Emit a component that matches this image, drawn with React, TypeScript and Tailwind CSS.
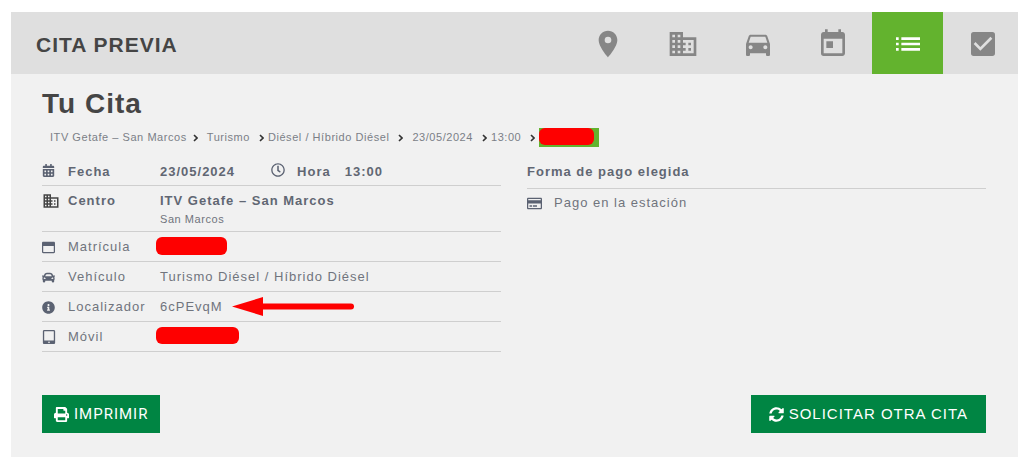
import type { ReactNode } from "react";
import clsx from "clsx";
import {
  FaCalendarAlt,
  FaCar,
  FaInfoCircle,
  FaPrint,
  FaRegClock,
  FaRegCreditCard,
  FaRegWindowMaximize,
  FaSyncAlt,
  FaTabletAlt,
} from "react-icons/fa";
import {
  MdBusiness,
  MdCheckBox,
  MdDirectionsCar,
  MdList,
  MdLocationOn,
  MdToday,
} from "react-icons/md";

const steps = [
  { label: "Estación", icon: MdLocationOn },
  { label: "Centro", icon: MdBusiness },
  { label: "Vehículo", icon: MdDirectionsCar },
  { label: "Fecha", icon: MdToday },
  { label: "Resumen", icon: MdList, active: true },
  { label: "Confirmación", icon: MdCheckBox },
];

function Header() {
  return (
    <header className="flex h-[62px] items-center justify-between bg-[#dfdfdf] pl-[25px]">
      <h1 className="pt-1 text-[21px] font-bold text-[#454545]">CITA PREVIA</h1>
      <nav className="flex h-full gap-1">
        {steps.map(({ label, icon: Icon, active }) => (
          <a
            key={label}
            href="#"
            aria-label={label}
            className={clsx(
              "flex w-[71px] items-center justify-center pt-0.5",
              active ? "bg-[#63b32e] text-white" : "text-[#868686]"
            )}
          >
            <Icon className="size-8" />
          </a>
        ))}
      </nav>
    </header>
  );
}

function Chevron() {
  return (
    <svg viewBox="0 0 5 8" className="mt-0.5 h-2 w-[5px] shrink-0" aria-hidden="true">
      <path d="M1 1l3 3-3 3" fill="none" stroke="#333" strokeWidth="1.6" />
    </svg>
  );
}

function Breadcrumb() {
  return (
    <nav className="flex h-5 items-center pl-2 text-[11px] tracking-wider text-[#7b7f87]">
      <span className="mr-1.5">ITV Getafe – San Marcos</span>
      <Chevron />
      <span className="mx-[9px]">Turismo</span>
      <Chevron />
      <span className="mr-[9px] ml-1">Diésel / Híbrido Diésel</span>
      <Chevron />
      <span className="mx-[9px]">23/05/2024</span>
      <Chevron />
      <span className="mr-[9px] ml-1">13:00</span>
      <Chevron />
      <span className="ml-1 h-[19px] w-[60px] bg-[#63b32e]">
        <span className="block h-[17px] w-[55px] rounded-md bg-[#fe0000]" />
      </span>
    </nav>
  );
}

type RowProps = {
  icon: ReactNode;
  label: string;
  bold?: boolean;
  children: ReactNode;
};

function Row({ icon, label, bold, children }: RowProps) {
  return (
    <div
      className={clsx(
        "grid grid-cols-[26px_92px_1fr] border-b border-[#cfcfcf] pt-[5px] leading-5",
        bold ? "pb-[3px] font-bold text-[#616773]" : "pb-1"
      )}
    >
      <dt className="col-span-2 grid grid-cols-subgrid">
        <span className="flex h-5 items-center text-[#5b6272]">{icon}</span>
        {label}
      </dt>
      <dd>{children}</dd>
    </div>
  );
}

function Arrow() {
  return (
    <svg viewBox="0 0 124 20" className="ml-[9px] h-5 w-[124px]" aria-hidden="true">
      <path d="M0 9.5L31 0v19z" fill="#fe0000" />
      <path d="M28 9.5h91" stroke="#fe0000" strokeWidth="6" strokeLinecap="round" />
    </svg>
  );
}

function Details() {
  return (
    <dl>
      <Row icon={<FaCalendarAlt className="mb-1 size-[13px]" />} label="Fecha" bold>
        <span className="flex items-center">
          23/05/2024
          <FaRegClock className="mr-3 mb-1 ml-9 size-[14px] text-[#5b6272]" />
          Hora
          <span className="ml-[14px]">13:00</span>
        </span>
      </Row>
      <Row icon={<MdBusiness className="size-[18px] text-[#444]" />} label="Centro" bold>
        ITV Getafe – San Marcos
        <small className="block pb-px text-[11px] leading-4 font-normal tracking-wider text-[#70747d]">
          San Marcos
        </small>
      </Row>
      <Row icon={<FaRegWindowMaximize className="size-[13px]" />} label="Matrícula">
        <span className="-ml-1 block h-[18px] w-[71px] rounded-md bg-[#fe0000]" />
      </Row>
      <Row icon={<FaCar className="size-[13px]" />} label="Vehículo">
        Turismo Diésel / Híbrido Diésel
      </Row>
      <Row icon={<FaInfoCircle className="size-[13px]" />} label="Localizador">
        <span className="flex items-center">
          6cPEvqM
          <Arrow />
        </span>
      </Row>
      <Row icon={<FaTabletAlt className="size-[14px]" />} label="Móvil">
        <span className="-ml-1 block h-[17px] w-[83px] rounded-md bg-[#fe0000]" />
      </Row>
    </dl>
  );
}

function Payment() {
  return (
    <section>
      <h3 className="border-b border-[#cfcfcf] pt-[5px] pb-1.5 leading-5 font-bold text-[#616773]">
        Forma de pago elegida
      </h3>
      <p className="flex items-center gap-3 py-1 leading-5">
        <FaRegCreditCard className="size-[15px] text-[#5b6272]" />
        Pago en la estación
      </p>
    </section>
  );
}

export default function App() {
  return (
    <div className="min-h-screen bg-white pt-3 pr-[6px] pl-[11px] font-['Liberation_Sans',Arial,sans-serif] text-[13px] tracking-[1px] text-[#70747d]">
      <div className="bg-[#f1f1f1]">
        <Header />
        <main className="pt-3 pr-8 pb-6 pl-[31px]">
          <h2 className="text-[28px] leading-9 font-bold text-[#454545]">Tu Cita</h2>
          <div className="pt-[5px] pb-2.5">
            <Breadcrumb />
          </div>
          <div className="grid grid-cols-2 gap-[26px]">
            <Details />
            <Payment />
          </div>
          <div className="mt-[43px] flex justify-between">
            <button
              type="button"
              className="flex h-[38px] items-center gap-[5px] bg-[#008543] px-3 font-[Roboto,sans-serif] text-[15px] text-white"
            >
              <FaPrint />
              IMPRIMIR
            </button>
            <button
              type="button"
              className="flex h-[38px] items-center gap-[5px] bg-[#008543] px-[18px] text-[15px] text-white"
            >
              <FaSyncAlt />
              SOLICITAR OTRA CITA
            </button>
          </div>
        </main>
      </div>
    </div>
  );
}
